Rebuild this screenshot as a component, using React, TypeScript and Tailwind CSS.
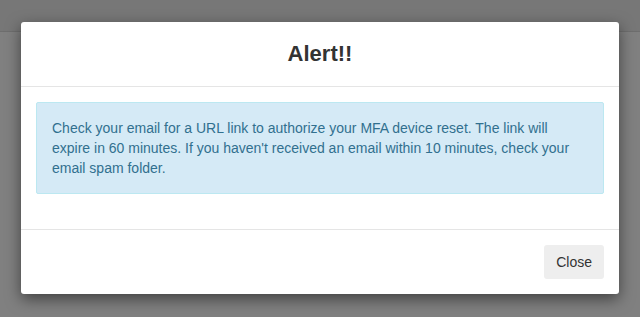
export default function App() {
  return (
    <div className="relative h-[317px] w-[640px] overflow-hidden bg-[#808080] font-['Liberation_Sans',Arial,sans-serif]">
      {/* page behind the backdrop */}
      <div className="h-[32px] border-b border-[#6e6e6e] bg-[#777777]" />

      {/* modal */}
      <div className="absolute left-[21px] top-[22px] w-[598px] rounded-[3px] bg-white shadow-[0_5px_15px_rgba(0,0,0,0.5)]">
        <div className="flex h-[65px] items-center justify-center border-b border-[#e5e5e5]">
          <h4 className="text-[22px] leading-none font-bold text-[#333333]">Alert!!</h4>
        </div>

        <div className="p-[15px]">
          <div className="mb-[20px] rounded-[2px] border border-[#bce8f1] bg-[#d5eaf6] p-[15px] text-[14px] leading-[20px] text-[#31708f]">
            Check your email for a URL link to authorize your MFA device reset. The link will expire in 60
            minutes. If you haven't received an email within 10 minutes, check your email spam folder.
          </div>
        </div>

        <div className="flex justify-end border-t border-[#e5e5e5] p-[15px]">
          <button className="h-[34px] rounded-[3px] bg-[#eeeeee] px-[12px] text-[14px] text-[#333333]">
            Close
          </button>
        </div>
      </div>
    </div>
  );
}
